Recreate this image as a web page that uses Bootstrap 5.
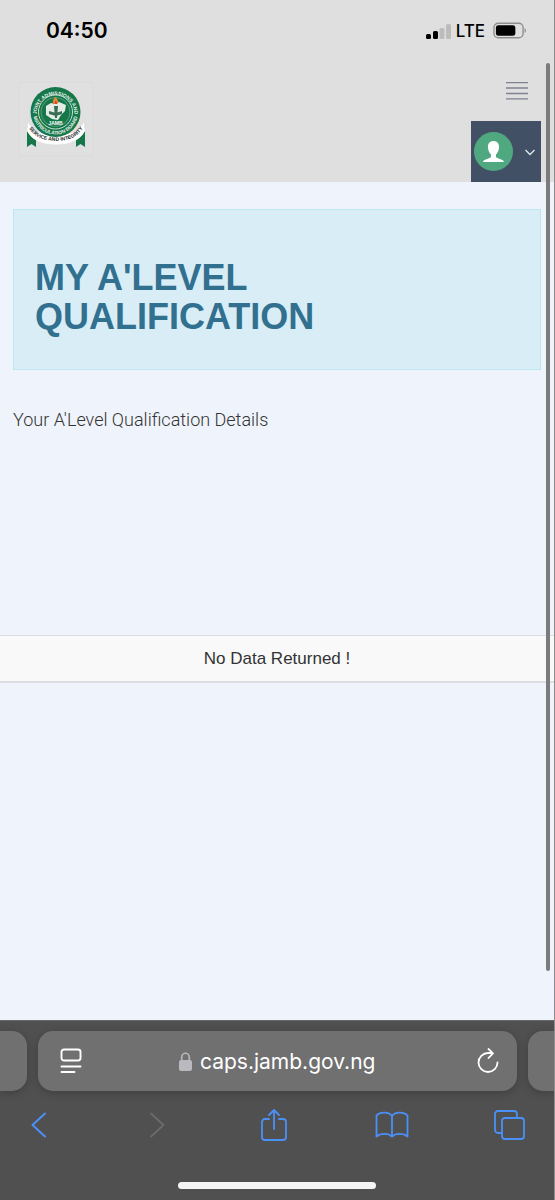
<!DOCTYPE html>
<html lang="en">
<head>
<meta charset="utf-8">
<meta name="viewport" content="width=device-width, initial-scale=1">
<title>My A'Level Qualification</title>
<link href="https://cdn.jsdelivr.net/npm/bootstrap@5.3.0/dist/css/bootstrap.min.css" rel="stylesheet">
<style>
body{background:#eff3fb;font-family:"Liberation Sans",Arial,sans-serif;color:#333}
svg{display:block}
.bare{background:none;border:0;padding:0}
.shell{border-right:1px solid #8c8c8c}
.top-area{background:#dfdfdf}
.status{height:61px;padding:0 28px 0 46px;font-family:Inter,sans-serif;color:#000}
.clock{font-size:21px;font-weight:600;line-height:24px}
.net{font-size:17px;font-weight:500;line-height:24px}
.site-head{padding:21px 13px 0 19px}
.menu-btn{padding:0 12px 0 0;height:39px}
.user-btn{background:#415065;width:70px;height:61px;padding:0 5px 0 3px}
.panel{background:#d9edf7;border:1px solid #bce8f1;margin:27px 13px 0;padding:48px 21px 33px}
.panel h1{color:#31708f;font-size:36px;line-height:39px;font-weight:700;margin:0;max-width:300px}
.lead-text{font-family:Roboto,"Liberation Sans",sans-serif;font-weight:300;font-size:18px;line-height:24px;margin:38px 13px 0}
.result{margin:203px 0 0;border-collapse:separate;border-spacing:0}
.result td{background:#f9f9f9;border:solid #dddee3;border-width:1px 0 2px;text-align:center;font-size:17px;line-height:24px;padding:11px 8px 10px;color:#333}
.thumb{right:4px;top:63px;bottom:49px;width:4px;border-radius:2px;background:#7b7b7d}
.dock{background:#505050;border-top:1px solid #68686a;padding-top:10px}
.pill{background:#707070;height:60px;border-radius:15px;box-shadow:0 2px 9px rgba(0,0,0,.22)}
.pill-left{width:27px;border-radius:0 15px 15px 0}
.pill-right{width:26px;border-radius:15px 0 0 15px}
.tabs-row{gap:11px}
.address{padding:0 18px 0 22px}
.address input{background:none;border:0;color:#fff;padding:0;width:180px;height:32px;font-family:Inter,sans-serif;font-size:21px;outline:0}
.tools{padding:14px 25px 0 19px}
.tools button{width:40px;height:40px;color:#4b90f7}
.home{width:198px;height:7px;border-radius:4px;background:#f4f4f4;margin:37px auto 11px}
</style>
</head>
<body>
<div class="shell d-flex flex-column min-vh-100 overflow-hidden">
  <div class="page-view flex-grow-1 position-relative d-flex flex-column">
    <div class="top-area">
      <div class="status d-flex align-items-center justify-content-between">
        <span class="clock">04:50</span>
        <div class="d-flex align-items-center">
          <svg width="26" height="18" viewBox="0 0 26 18" aria-hidden="true"><rect x="0" y="12" width="5" height="5" rx="1.5"/><rect x="7" y="9" width="5" height="8" rx="1.5"/><g fill="#bcbcbc"><rect x="13.500" y="6" width="5" height="11" rx="1.500"/><rect x="20" y="2" width="5" height="15" rx="1.500"/></g></svg>
          <span class="net ms-1 me-2">LTE</span>
          <svg width="33" height="18" viewBox="0 0 34 18" aria-hidden="true"><rect x="1" y="1" width="30" height="15" rx="4.500" fill="none" stroke="#8d8d8d" stroke-width="1.400"/><rect x="3" y="3" width="20" height="11" rx="2.500"/><path d="M32.500 6v5q1.400-.6 1.400-2.500T32.500 6" fill="#8d8d8d"/></svg>
        </div>
      </div>
      <header class="site-head d-flex justify-content-between align-items-start">
        <a href="#" aria-label="JAMB home">
          <svg width="74" height="74" viewBox="0 0 74 74" font-family="Liberation Sans, sans-serif" font-weight="700">
            <defs>
              <path id="ring-top" d="M17.500 32a19 19 0 0 1 38 0"/>
              <path id="ring-low" d="M14 30a22.500 22.500 0 0 0 45 0"/>
              <path id="ribbon" d="M10 46q8 13 27 13t27-13"/>
            </defs>
            <rect x=".5" y=".5" width="73" height="73" fill="#e1e0e0" stroke="#dbdbdb"/>
            <path d="M8 44l9 6v15l-4.500-3L8 65zM66 44l-9 6v15l4.500-3 4.500 3z" fill="#15774a"/>
            <path d="M9 39q5 14 28 14t28-14l1 9q-7 15-29 15T8 48z" fill="#fff" stroke="#cfd3d0" stroke-width=".5"/>
            <circle cx="36.500" cy="30" r="25" fill="#15774a"/>
            <circle cx="36.500" cy="30" r="17" fill="none" stroke="#c5dfcf"/>
            <circle cx="36.500" cy="30" r="14.500" fill="none" stroke="#68a886" stroke-width=".8"/>
            <path d="M27 24l5-3 4 1 4-2 7 3-1 6-4 4-3 5-6-1-6-4z" fill="#e3ece7"/>
            <path d="M35 24h4l-1 12h-2zM30 29l7 2 6-2v3l-6 2-7-2z" fill="#376e55"/>
            <path d="M34.500 22q-2-3 2-7 4 4 2 7z" fill="#ef8b2e"/><path d="M36 22q-1-2 1-4 1 3 1 4z" fill="#d9422e"/>
            <path d="M9 42q5 13 28 14 23-1 28-14l1 7q-7 13-29 13T8 49z" fill="#fff"/>
            <g text-anchor="middle" aria-hidden="true">
              <text font-size="5" fill="#e6f1ea"><textPath href="#ring-top" startOffset="50%">JOINT ADMISSIONS AND</textPath></text>
              <text font-size="5" fill="#e6f1ea"><textPath href="#ring-low" startOffset="50%">MATRICULATION BOARD</textPath></text>
              <text x="36.500" y="43" font-size="5" fill="#fff">JAMB</text>
              <text font-size="5" fill="#222"><textPath href="#ribbon" startOffset="50%">SERVICE AND INTEGRITY</textPath></text>
            </g>
          </svg>
        </a>
        <div class="d-flex flex-column align-items-end">
          <button class="menu-btn bare d-flex pe-2 me-1" type="button" aria-label="Menu"><svg width="23" height="20" viewBox="0 0 23 20" stroke="#7f8290" stroke-width="1.300"><path d="M0 .7h22M0 6h22M0 11.500h22M0 16.800h22"/></svg></button>
          <button class="user-btn border-0 d-flex align-items-center justify-content-between" type="button" aria-label="Account">
            <svg width="39" height="39" viewBox="0 0 39 39"><circle cx="19.500" cy="19.500" r="19.500" fill="#50a881"/><path d="M19.500 9c-4 0-6 3-5.500 7 .3 3 1.500 5 3 6.500v2.500c-2 2-7.500 2-8 5h21c-.5-3-6-3-8-5v-2.500c1.500-1.500 2.700-3.500 3-6.500.5-4-1.500-7-5.500-7z" fill="#fff"/></svg>
            <svg width="12" height="8" viewBox="0 0 12 8" fill="none" stroke="#e2e7ee" stroke-width="1.300"><path d="M1.500 2l4.500 4.500L10.500 2"/></svg>
          </button>
        </div>
      </header>
    </div>
    <main>
      <section class="panel"><h1>MY A'LEVEL QUALIFICATION</h1></section>
      <p class="lead-text">Your A'Level Qualification Details</p>
      <table class="result w-100"><tbody><tr><td>No Data Returned !</td></tr></tbody></table>
    </main>
    <div class="thumb position-absolute"></div>
  </div>
  <footer class="dock">
    <div class="tabs-row d-flex">
      <div class="pill pill-left"></div>
      <div class="pill address flex-grow-1 d-flex align-items-center justify-content-between">
        <button class="bare" type="button" aria-label="Page settings"><svg width="22" height="26" viewBox="0 0 22 26" fill="none" stroke="#fff" stroke-width="1.900" stroke-linecap="round"><rect x="1.500" y="1.500" width="19" height="11" rx="2.500"/><path d="M1.500 18.500h19M1.500 24h13"/></svg></button>
        <div class="d-flex align-items-center gap-2">
          <svg width="13" height="19" viewBox="0 0 13 19" aria-hidden="true"><rect y="8" width="13" height="11" rx="2" fill="#b9b9bf"/><path d="M2.700 9V5.500a3.800 4.200 0 0 1 7.600 0V9" fill="none" stroke="#b9b9bf" stroke-width="1.600"/></svg>
          <input type="text" value="caps.jamb.gov.ng" aria-label="Address">
        </div>
        <button class="bare" type="button" aria-label="Reload"><svg width="22" height="26" viewBox="0 0 22 26" fill="none" stroke="#fff" stroke-width="1.800" stroke-linecap="round" stroke-linejoin="round"><path d="M20.500 14.500a9.500 9.500 0 1 1-9.500-9.500h4.500M11.500 1l4.500 4.300-4.500 4.700"/></svg></button>
      </div>
      <div class="pill pill-right"></div>
    </div>
    <nav class="tools d-flex justify-content-between" aria-label="Browser">
      <button class="bare d-flex align-items-center justify-content-center" type="button" aria-label="Back"><svg width="16" height="26" viewBox="0 0 16 26" fill="none" stroke="currentColor" stroke-width="2" stroke-linecap="round" stroke-linejoin="round"><path d="M14 1.500L1.500 13 14 24.500"/></svg></button>
      <button class="bare d-flex align-items-center justify-content-center" type="button" aria-label="Forward"><svg width="16" height="26" viewBox="0 0 16 26" fill="none" stroke="#6b6b6b" stroke-width="1.800" stroke-linecap="round" stroke-linejoin="round"><path d="M2 1.500L14.500 13 2 24.500"/></svg></button>
      <button class="bare d-flex align-items-center justify-content-center" type="button" aria-label="Share"><svg width="28" height="34" viewBox="0 0 28 34" fill="none" stroke="currentColor" stroke-width="1.800" stroke-linecap="round" stroke-linejoin="round"><path d="M9 11H5a3 3 0 0 0-3 3v15a3 3 0 0 0 3 3h18a3 3 0 0 0 3-3V14a3 3 0 0 0-3-3h-4M14 21V2M9 7l5-5 5 5"/></svg></button>
      <button class="bare d-flex align-items-center justify-content-center" type="button" aria-label="Bookmarks"><svg width="34" height="28" viewBox="0 0 34 28" fill="none" stroke="currentColor" stroke-width="1.800" stroke-linejoin="round"><path d="M17 5C14 .5 5 .5 1.500 4.500v21c4-3.500 12-3.500 15.500 0 3.500-3.500 11.500-3.500 15.500 0v-21C29 .5 20 .5 17 5zv20.500"/></svg></button>
      <button class="bare d-flex align-items-center justify-content-center" type="button" aria-label="Tabs"><svg width="32" height="32" viewBox="0 0 32 32" fill="none" stroke="currentColor" stroke-width="1.800"><rect x="9" y="9" width="22" height="21" rx="3"/><path d="M9 24H5a3 3 0 0 1-3-3V5a3 3 0 0 1 3-3h16a3 3 0 0 1 3 3v4"/></svg></button>
    </nav>
    <div class="home"></div>
  </footer>
</div>
<script src="https://cdn.jsdelivr.net/npm/bootstrap@5.3.0/dist/js/bootstrap.bundle.min.js"></script>
</body>
</html>
